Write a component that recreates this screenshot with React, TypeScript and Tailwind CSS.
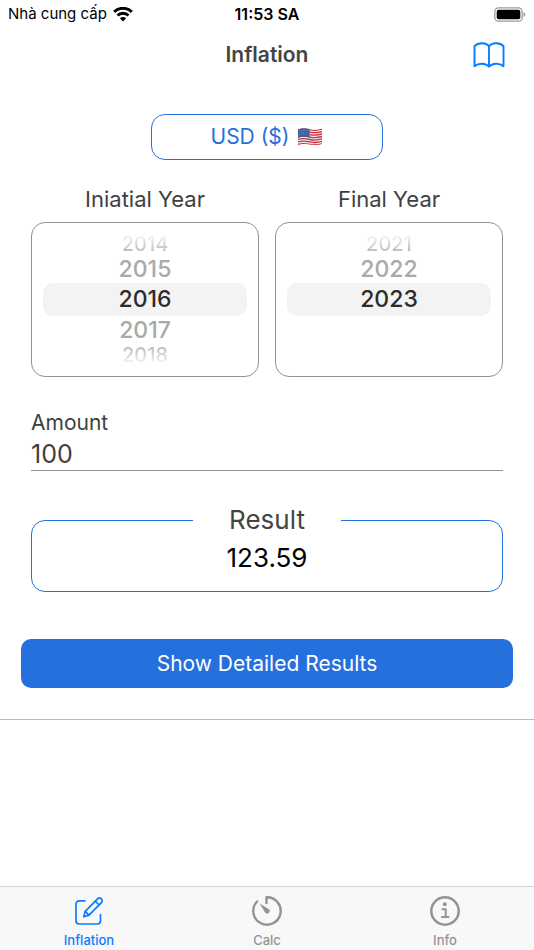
import React, { useState } from 'react'

const MAX_YEAR = 2023

const WifiIcon = () => (
  <svg width="20" height="15" viewBox="0 0 20 15" fill="none" stroke="#000" strokeWidth="2.9" aria-hidden="true">
    <path d="M1.2 4.9C6.2 0 13.8 0 18.8 4.9" />
    <path d="M4.5 8.5C7.6 5.5 12.4 5.5 15.5 8.5" />
    <path d="M10 14.4 6.9 11.3C8.6 9.6 11.4 9.6 13.1 11.3Z" fill="#000" stroke="none" />
  </svg>
)

const BatteryIcon = () => (
  <svg width="32" height="15" viewBox="0 0 32 15" aria-hidden="true">
    <rect x="0.8" y="0.8" width="27.4" height="13.4" rx="3.8" fill="none" stroke="#9b9b9b" strokeWidth="1.3" />
    <rect x="2.7" y="2.7" width="23.6" height="9.6" rx="2" fill="#000" />
    <path d="M29.6 5v5c1.1-.4 1.7-1.3 1.7-2.5S30.7 5.4 29.6 5Z" fill="#9b9b9b" />
  </svg>
)

const BookIcon = () => (
  <svg width="32" height="26" viewBox="0 0 32 26" fill="none" stroke="#0a7cff" strokeWidth="1.9" strokeLinejoin="round" aria-hidden="true">
    <path d="M16 4.5C13.2.4 5.2.2 1.5 4.2V24.2C5.5 20.8 12.8 21 16 24.7C19.2 21 26.5 20.8 30.5 24.2V4.2C26.8.2 18.8.4 16 4.5Z" />
    <path d="M16 4.5V24.5" />
  </svg>
)

const FlagIcon = () => (
  <svg width="26" height="18" viewBox="0 0 26 18" aria-hidden="true">
    <defs>
      <clipPath id="flag">
        <path d="M1 1.5C5-.2 9 .3 13 1.2S21 2 25 .6V16C21 17.6 17 17 13 16.4S5 15.4 1 17.4Z" />
      </clipPath>
    </defs>
    <g clipPath="url(#flag)">
      <rect width="26" height="18" fill="#eceaec" />
      <g fill="none" stroke="#d0303f" strokeWidth="1.3">
        {[0, 1, 2, 3, 4, 5, 6].map((i) => (
          <path key={i} d="M0 2C5-.1 9 .8 13 1.7S21 2.5 26 .8" transform={`translate(0 ${i * 2.45})`} />
        ))}
      </g>
      <path d="M0 0H12.5V9.4C8 8.5 4 8.5 0 10.2Z" fill="#3f5f96" />
      <g fill="none" stroke="#b9c7df" strokeWidth=".5" strokeDasharray=".7 1.3">
        <path d="M2 3C5 2 8 1.9 12 2.7" />
        <path d="M2 5C5 4 8 3.9 12 4.7" />
        <path d="M2 7C5 6 8 5.9 12 6.7" />
      </g>
    </g>
  </svg>
)

const EditIcon = () => (
  <svg width="30" height="30" viewBox="0 0 30 30" fill="none" stroke="currentColor" strokeWidth="1.7" strokeLinecap="round" strokeLinejoin="round" aria-hidden="true">
    <path d="M11 4.8H5.2A3.2 3.2 0 0 0 2 8V24.8A3.2 3.2 0 0 0 5.2 28H23.3A3.2 3.2 0 0 0 26.5 24.8V18.7" />
    <path d="M9.8 20.8 11.2 15.3 23.6 2.9A2.65 2.65 0 0 1 27.4 6.7L15 19.1Z" />
    <path d="M21.3 5.2 25.1 9M11.2 15.3 15 19.1" />
  </svg>
)

const TimerIcon = () => (
  <svg width="32" height="32" viewBox="0 0 32 32" fill="none" stroke="currentColor" strokeWidth="2.4" strokeLinecap="round" strokeLinejoin="round" aria-hidden="true">
    <path d="M15.5 8V2.3A13.7 13.7 0 1 1 6.1 6.5" />
    <path d="M8.6 8.6 17.6 14.1A2.5 2.5 0 1 1 14.1 17.6Z" fill="currentColor" stroke="none" />
  </svg>
)

const InfoIcon = () => (
  <svg width="32" height="32" viewBox="0 0 32 32" fill="none" stroke="currentColor" strokeWidth="2.5" aria-hidden="true">
    <circle cx="16" cy="16" r="13.7" />
    <circle cx="15.8" cy="9.3" r="2" fill="currentColor" stroke="none" />
    <path d="M12.6 14.3H16.7V21.8M12.2 22H20.3" strokeWidth="2" />
  </svg>
)

// rows of the wheel, from two above the selected year to two below it
const wheelRows = [
  { offset: -2, style: 'h-[22px] text-xl bg-linear-to-b from-[#f0f0f0] from-20% to-[#b0b0b0] bg-clip-text text-transparent' },
  { offset: -1, style: 'h-[28px] text-[23px] text-[#a9a9a9]' },
  { offset: 0, style: 'h-[33px] text-[23px] text-[#2c2c2c] bg-[#f3f3f3] rounded-[10px]' },
  { offset: 1, style: 'h-[28px] text-[23px] text-[#a9a9a9]' },
  { offset: 2, style: 'h-[22px] text-xl bg-linear-to-t from-[#f0f0f0] from-20% to-[#b0b0b0] bg-clip-text text-transparent' },
]

interface YearPickerProps {
  label: string;
  year: number;
  handleYear: (year: number) => void;
}

const YearPicker: React.FC<YearPickerProps> = ({ label, year, handleYear }) => {
  return (
    <section className="flex-1">
      <h2 className="text-center text-[22px] leading-7 text-[#3f3f3f]">{label}</h2>
      <div className="mt-[9px] flex flex-col rounded-[14px] border border-[#929292] px-[11px] py-[10px] font-medium">
        {wheelRows.map(({ offset, style }) =>
          year + offset <= MAX_YEAR ? (
            <button key={offset} type="button" className={`leading-none ${style}`} onClick={() => handleYear(year + offset)}>
              {year + offset}
            </button>
          ) : (
            <div key={offset} className={style} />
          )
        )}
      </div>
    </section>
  )
}

const tabs = [
  { name: 'Inflation', icon: <EditIcon /> },
  { name: 'Calc', icon: <TimerIcon /> },
  { name: 'Info', icon: <InfoIcon /> },
]

const App: React.FC = () => {
  const [initialYear, setInitialYear] = useState(2016)
  const [finalYear, setFinalYear] = useState(2023)
  const [amount, setAmount] = useState('100')
  const [activeTab, setActiveTab] = useState('Inflation')

  return (
    <div className="flex min-h-screen flex-col bg-white font-['Inter','Liberation_Sans',sans-serif]">
      <div className="grid h-7 grid-cols-3 items-center px-2 text-[15px] text-black">
        <div className="flex items-center gap-1.5 whitespace-nowrap">
          Nhà cung cấp <WifiIcon />
        </div>
        <div className="text-center text-base font-semibold">11:53 SA</div>
        <div className="flex justify-end">
          <BatteryIcon />
        </div>
      </div>

      <header className="grid h-[54px] grid-cols-3 items-center px-[29px]">
        <h1 className="col-start-2 text-center text-[21px] font-semibold text-[#444]">Inflation</h1>
        <button type="button" aria-label="Guide" className="justify-self-end">
          <BookIcon />
        </button>
      </header>

      <main className="border-b border-[#bdbdbd] px-[21px] pt-8 pb-[31px]">
        <div className="px-[10px]">
          <button type="button" className="mx-auto flex h-[46px] w-[232px] items-center justify-center gap-2 rounded-[14px] border border-[#2570dc] text-[21px] text-[#2570dc]">
            USD ($) <FlagIcon />
          </button>

          <div className="mt-[25px] flex gap-4">
            <YearPicker label="Iniatial Year" year={initialYear} handleYear={setInitialYear} />
            <YearPicker label="Final Year" year={finalYear} handleYear={setFinalYear} />
          </div>

          <label htmlFor="amount" className="mt-8 block text-[21px] leading-7 text-[#3f3f3f]">Amount</label>
          <input
            id="amount"
            type="text"
            inputMode="decimal"
            value={amount}
            className="block h-[34px] w-full border-b border-[#929292] pt-0.5 text-[25px] text-[#3f3f3f] outline-none"
            onChange={(event) => setAmount(event.target.value)}
          />

          <fieldset className="mt-[29px] h-[92px] rounded-[14px] border border-[#2570dc]">
            <legend className="mx-auto w-[148px] text-center text-[26px] leading-10 text-[#444]">Result</legend>
            <output htmlFor="amount" className="block text-center text-[26px] leading-9 text-black">123.59</output>
          </fieldset>
        </div>

        <button type="button" className="mt-[47px] h-[49px] w-full rounded-[10px] bg-[#2570dc] text-[21px] text-white">
          Show Detailed Results
        </button>
      </main>

      <nav className="mt-auto grid h-16 grid-cols-3 border-t border-[#d2d2d2] bg-[#f8f8f8]">
        {tabs.map(({ name, icon }) => (
          <button
            key={name}
            type="button"
            className={`flex flex-col items-center pt-2 text-[13px] font-medium ${activeTab === name ? 'text-[#0a7cff]' : 'text-[#949494]'}`}
            onClick={() => setActiveTab(name)}
          >
            <span className="flex h-8 items-center">{icon}</span>
            <span className="mt-[3px] leading-5">{name}</span>
          </button>
        ))}
      </nav>
    </div>
  )
}

export default App
